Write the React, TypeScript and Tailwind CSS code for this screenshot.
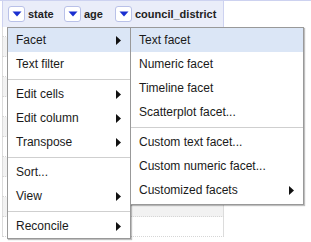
import React from "react";

const font = "font-['Liberation_Sans',Arial,sans-serif]";

function DropBtn() {
  return (
    <span className="flex h-[16px] w-[17px] shrink-0 items-center justify-center rounded-[3px] border border-[#b9c1e8] bg-white">
      <svg width="10" height="6" viewBox="0 0 10 6">
        <polygon points="0.5,0.5 9.5,0.5 5,5.5" fill="#1a2fd0" />
      </svg>
    </span>
  );
}

function Arrow() {
  return (
    <svg width="5" height="9" viewBox="0 0 5 9" className="shrink-0">
      <polygon points="0,0 5,4.5 0,9" fill="#111" />
    </svg>
  );
}

type Item = { label?: string; sub?: boolean; active?: boolean; sep?: boolean };

function Menu({ items, className }: { items: Item[]; className: string }) {
  return (
    <div
      className={`absolute flex flex-col border border-[#999] bg-white shadow-[1px_1px_1px_rgba(0,0,0,0.25)] ${className}`}
    >
      {items.map((it, i) =>
        it.sep ? (
          <div key={i} className="flex h-[6px] items-center">
            <div className="h-px w-full bg-[#cfcfcf]" />
          </div>
        ) : (
          <div
            key={i}
            className={`flex h-[24px] items-center justify-between pl-[8px] pr-[9px] text-[12px] text-[#1a1a1a] ${
              it.active ? "bg-[#dbe6f6]" : ""
            }`}
          >
            <span className="whitespace-nowrap">{it.label}</span>
            {it.sub && <Arrow />}
          </div>
        )
      )}
    </div>
  );
}

export default function App() {
  const rows = Array.from({ length: 11 });
  return (
    <div className={`relative h-[242px] w-[311px] overflow-hidden bg-white ${font}`}>
      <div className="h-px w-full bg-[#cdd2f0]" />
      <div className="flex pl-[2px]">
        <div className="flex flex-col">
          <div className="flex h-[26px] w-[222px] items-center border-l border-[#cdd2f0] bg-[#eaedf9] text-[11px] font-bold text-[#222]">
            <div className="flex w-[57px] items-center gap-[3px] pl-[5px]">
              <DropBtn />
              <span>state</span>
            </div>
            <div className="flex w-[50px] items-center gap-[3px] pl-[4px]">
              <DropBtn />
              <span>age</span>
            </div>
            <div className="flex flex-1 items-center gap-[3px] pl-[5px]">
              <DropBtn />
              <span>council_district</span>
            </div>
            <div className="h-full w-px bg-[#cdd2f0]" />
          </div>
          <div className="flex flex-col">
            {rows.map((_, i) => (
              <div
                key={i}
                className={`flex ${i === 0 ? "h-[10px]" : "h-[20px]"} w-[222px] border-b border-dotted border-[#d6d6d6] ${
                  i % 2 === 1 ? "bg-[#f2f2f2]" : "bg-white"
                }`}
              >
                <div className="h-full w-px bg-[#dcdcdc]" />
                <div className="flex-1" />
                <div className="h-full w-px bg-[#dcdcdc]" />
              </div>
            ))}
          </div>
        </div>
      </div>

      <Menu
        className="left-[7px] top-[27px] w-[124px]"
        items={[
          { label: "Facet", sub: true, active: true },
          { label: "Text filter" },
          { sep: true },
          { label: "Edit cells", sub: true },
          { label: "Edit column", sub: true },
          { label: "Transpose", sub: true },
          { sep: true },
          { label: "Sort..." },
          { label: "View", sub: true },
          { sep: true },
          { label: "Reconcile", sub: true },
        ]}
      />
      <Menu
        className="left-[130px] top-[27px] w-[174px] pb-[2px]"
        items={[
          { label: "Text facet", active: true },
          { label: "Numeric facet" },
          { label: "Timeline facet" },
          { label: "Scatterplot facet..." },
          { sep: true },
          { label: "Custom text facet..." },
          { label: "Custom numeric facet..." },
          { label: "Customized facets", sub: true },
        ]}
      />
    </div>
  );
}
